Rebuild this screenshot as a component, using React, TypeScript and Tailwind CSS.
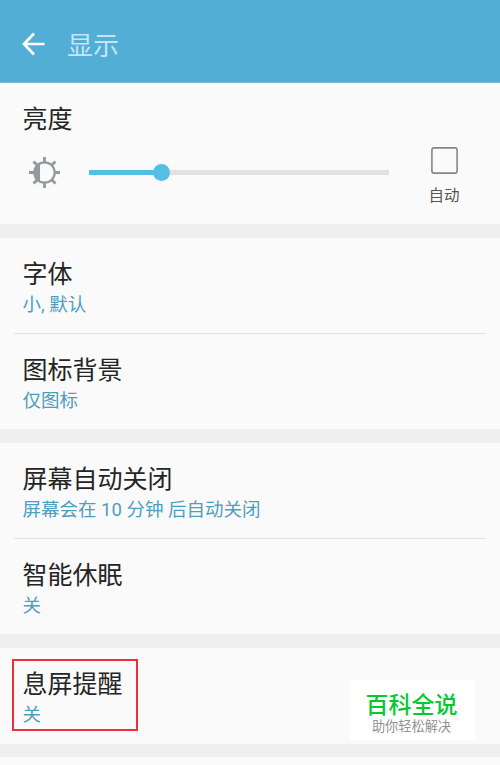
import type { ReactNode } from 'react';

function Row({ title, value, divider, marked }: {
  title: string; value: string; divider?: boolean; marked?: boolean;
}) {
  return (
    <div className="relative h-[95.5px] pl-[22.5px] pt-[22px]">
      <div className="h-[30px] text-[25px] leading-[30px] text-[#252525]">{title}</div>
      <div className="mt-[3px] h-6 whitespace-pre text-[18.5px] leading-6 text-[#4b9fc0]">{value}</div>
      {divider && <div className="absolute inset-x-3.5 top-[95px] h-px bg-[#e3e3e3]" />}
      {marked && <div className="absolute left-3 top-[11px] h-[72px] w-[126px] border-2 border-[#ee2f38]" />}
    </div>
  );
}

function Group({ children }: { children: ReactNode }) {
  return <section className="mb-3.5 h-[191px] bg-[#fafafa]">{children}</section>;
}

function BrightnessIcon() {
  return (
    <svg className="ml-7 h-8 w-8" viewBox="0 0 32 32" fill="none" stroke="#929a9b">
      <circle cx="16.5" cy="16.5" r="10.2" strokeWidth="2.2" />
      <path d="M12 7.2A10.4 10.4 0 0 0 12 25.8Z" fill="#929a9b" stroke="none" />
      <path
        d="M16.5 1v5M16.5 27v5M1 16.5h5M27 16.5h5M5.5 5.5l3.8 3.8M23.7 23.7l3.8 3.8M27.5 5.5l-3.8 3.8M9.3 23.7l-3.8 3.8"
        strokeWidth="2.8"
      />
    </svg>
  );
}

export default function App() {
  return (
    <div className="relative h-[765px] w-[500px] overflow-hidden bg-[#efefef] font-[Roboto,'Noto_Sans_CJK_SC',sans-serif]">
      <header className="flex h-[83px] items-center border-b border-[#77b9d2] bg-[#52aed5] pl-[22px] pt-1.5">
        <svg className="h-6 w-6" viewBox="0 0 24 24" fill="none" stroke="white" strokeWidth="2.7">
          <path d="M12 1.5L2 12l10 10.5M2 12h20.5" />
        </svg>
        <h1 className="ml-[21px] mt-1 text-[26px] leading-[30px] text-[#c5e5f2]">显示</h1>
      </header>

      <section className="mb-3.5 h-[141px] bg-[#fafafa] pt-[22px]">
        <h2 className="h-7 pl-[22.5px] text-[25px] leading-[30px] text-[#252525]">亮度</h2>
        <div className="flex h-[78px] items-start">
          <div className="flex h-[78px] items-center">
            <BrightnessIcon />
            <div className="relative ml-[29px] h-[5px] w-[300px] bg-[#e2e0e0]">
              <div className="h-full w-[73px] bg-[#55bee3]" />
              <div className="absolute -top-1.5 left-[64px] h-[17px] w-[17px] rounded-full bg-[#55bee3]" />
            </div>
          </div>
          <div className="ml-[35px] mt-3.5 flex w-10 flex-col items-center">
            <svg className="h-[27px] w-[27px]" viewBox="0 0 27 27" fill="none" stroke="#858585" strokeWidth="1.6">
              <rect x="0.9" y="0.9" width="25.2" height="25.2" rx="2.2" />
            </svg>
            <span className="mt-2.5 text-[15.5px] leading-6 text-[#555555]">自动</span>
          </div>
        </div>
      </section>

      <Group>
        <Row title="字体" value="小, 默认" divider />
        <Row title="图标背景" value="仅图标" />
      </Group>
      <Group>
        <Row title="屏幕自动关闭" value="屏幕会在 10 分钟 后自动关闭" divider />
        <Row title="智能休眠" value="关" />
      </Group>
      <section className="mb-[13px] h-24 bg-[#fafafa]">
        <Row title="息屏提醒" value="关" marked />
      </section>
      <section className="h-3 bg-[#fafafa]" />

      <div className="absolute left-[350px] top-[680px] flex h-[60px] w-[125px] flex-col items-center bg-white pr-0.5 pt-[13px]">
        <div className="h-[26px] text-[23px] font-medium leading-[26px] text-[#08c832]">百科全说</div>
        <div className="text-[13.2px] leading-4 text-[#929292]">助你轻松解决</div>
      </div>
    </div>
  );
}
